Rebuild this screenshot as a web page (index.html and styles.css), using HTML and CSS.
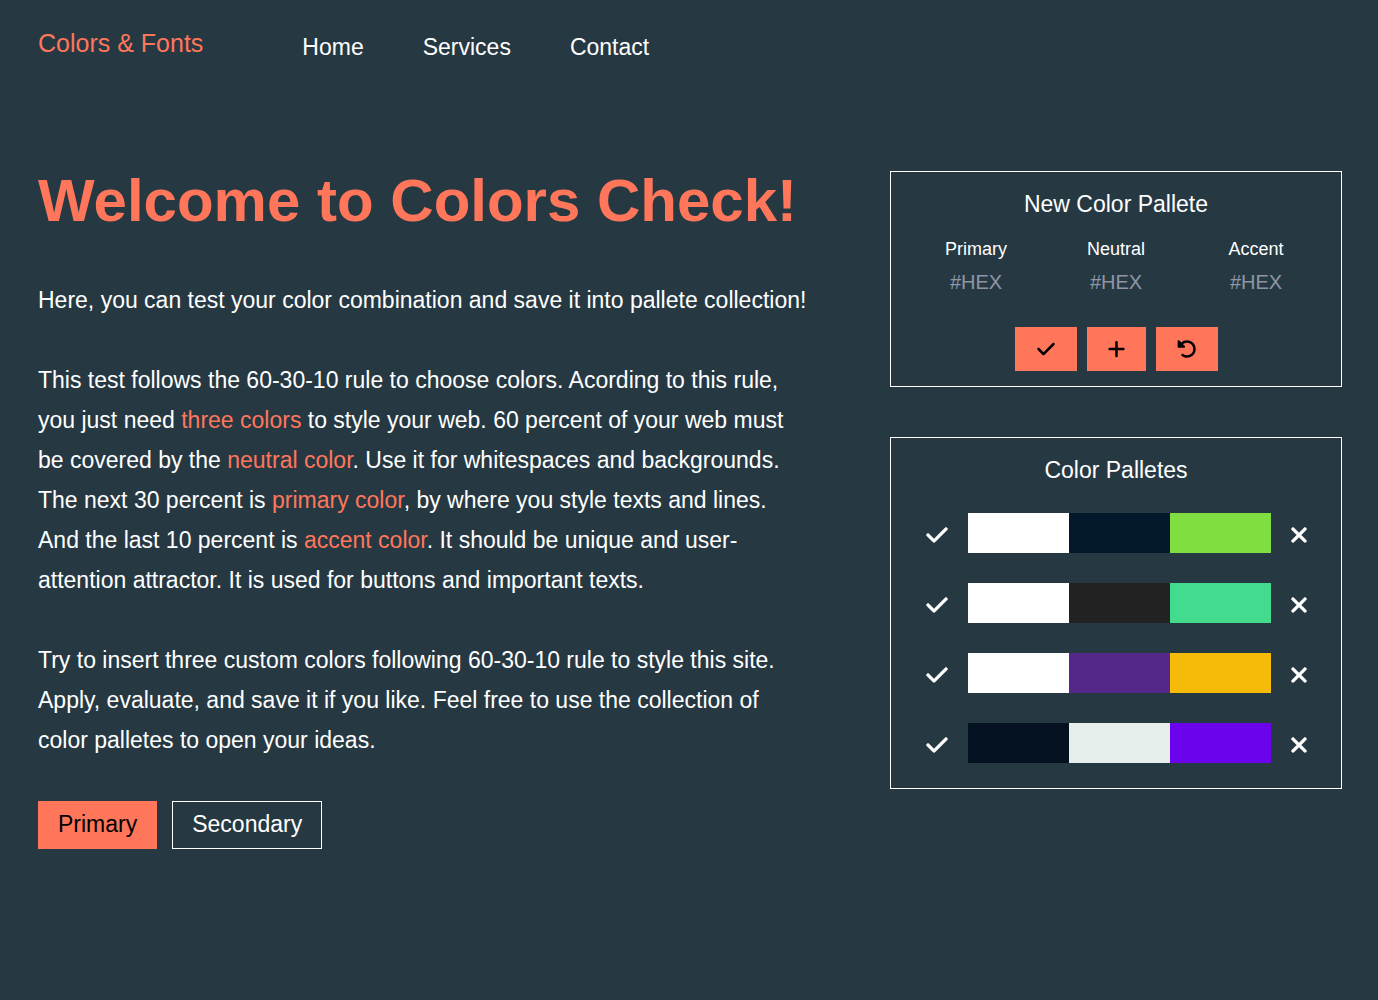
FILE: index.html
```html
<!DOCTYPE html>
<html lang="en">
<head>
<meta charset="utf-8">
<meta name="viewport" content="width=device-width, initial-scale=1">
<title>Colors &amp; Fonts</title>
<link rel="stylesheet" href="styles.css">
</head>
<body>
<svg class="sprite" aria-hidden="true">
  <symbol id="check" viewBox="0 0 512 512"><path d="M470.6 105.4c12.5 12.5 12.5 32.8 0 45.3l-256 256c-12.5 12.5-32.8 12.5-45.3 0l-128-128c-12.5-12.5-12.5-32.8 0-45.3s32.8-12.5 45.3 0L192 338.7 425.4 105.4c12.5-12.5 32.8-12.5 45.3 0z"/></symbol>
  <symbol id="plus" viewBox="0 0 448 512"><path d="M256 80c0-17.7-14.3-32-32-32s-32 14.3-32 32v144H48c-17.7 0-32 14.3-32 32s14.3 32 32 32h144v144c0 17.7 14.3 32 32 32s32-14.3 32-32V288h144c17.7 0 32-14.3 32-32s-14.3-32-32-32H256V80z"/></symbol>
  <symbol id="undo" viewBox="0 0 512 512"><path d="M480 256c0 123.4-100.5 223.9-223.9 223.9c-48.86 0-95.19-15.58-134.2-44.86c-14.12-10.59-16.97-30.66-6.375-44.81c10.59-14.12 30.62-16.94 44.81-6.375c27.84 20.91 61 31.94 95.88 31.94C344.3 415.8 416 344.1 416 256s-71.69-159.8-159.8-159.8c-37.46 0-73.09 13.49-101.3 36.64l45.12 45.14c17.01 17.02 4.955 46.1-19.1 46.1H35.17C24.58 224.1 16 215.5 16 204.9V59.04c0-24.04 29.07-36.08 46.07-19.07l47.6 47.63C149.9 52.71 201.5 32.11 256.1 32.11C379.5 32.11 480 132.6 480 256z"/></symbol>
  <symbol id="xmark" viewBox="0 0 384 512"><path d="M342.6 150.6c12.5-12.5 12.5-32.8 0-45.3s-32.8-12.5-45.3 0L192 210.7 86.6 105.4c-12.5-12.5-32.8-12.5-45.3 0s-12.5 32.8 0 45.3L146.7 256 41.4 361.4c-12.5 12.5-12.5 32.8 0 45.3s32.8 12.5 45.3 0L192 301.3 297.4 406.6c12.5 12.5 32.8 12.5 45.3 0s12.5-32.8 0-45.3L237.3 256 342.6 150.6z"/></symbol>
</svg>
<header class="header">
  <a class="logo" href="#">Colors &amp; Fonts</a>
  <nav class="nav">
    <a href="#">Home</a>
    <a href="#">Services</a>
    <a href="#">Contact</a>
  </nav>
</header>
<main class="main">
  <section class="intro">
    <h1>Welcome to Colors Check!</h1>
    <p>Here, you can test your color combination and save it into pallete collection!</p>
    <p>This test follows the 60-30-10 rule to choose colors. Acording to this rule, you just need <span class="accent">three colors</span> to style your web. 60 percent of your web must be covered by the <span class="accent">neutral color</span>. Use it for whitespaces and backgrounds. The next 30 percent is <span class="accent">primary color</span>, by where you style texts and lines. And the last 10 percent is <span class="accent">accent color</span>. It should be unique and user-attention attractor. It is used for buttons and important texts.</p>
    <p>Try to insert three custom colors following 60-30-10 rule to style this site. Apply, evaluate, and save it if you like. Feel free to use the collection of color palletes to open your ideas.</p>
    <div class="actions">
      <button class="btn btn-primary" type="button">Primary</button>
      <button class="btn btn-secondary" type="button">Secondary</button>
    </div>
  </section>
  <aside class="side">
    <form class="card">
      <h2>New Color Pallete</h2>
      <div class="fields">
        <div class="field"><label for="primary">Primary</label><input id="primary" type="text" placeholder="#HEX"></div>
        <div class="field"><label for="neutral">Neutral</label><input id="neutral" type="text" placeholder="#HEX"></div>
        <div class="field"><label for="accent">Accent</label><input id="accent" type="text" placeholder="#HEX"></div>
      </div>
      <div class="tools">
        <button class="tool" type="button" aria-label="Apply"><svg class="icon"><use href="#check"/></svg></button>
        <button class="tool" type="button" aria-label="Save"><svg class="icon icon-plus"><use href="#plus"/></svg></button>
        <button class="tool" type="button" aria-label="Reset"><svg class="icon"><use href="#undo"/></svg></button>
      </div>
    </form>
    <section class="card">
      <h2>Color Palletes</h2>
      <ul class="palettes">
        <li class="palette">
          <button class="row-btn" type="button" aria-label="Apply"><svg><use href="#check"/></svg></button>
          <div class="swatches"><span class="white"></span><span class="navy"></span><span class="lime"></span></div>
          <button class="row-btn" type="button" aria-label="Delete"><svg><use href="#xmark"/></svg></button>
        </li>
        <li class="palette">
          <button class="row-btn" type="button" aria-label="Apply"><svg><use href="#check"/></svg></button>
          <div class="swatches"><span class="white"></span><span class="charcoal"></span><span class="green"></span></div>
          <button class="row-btn" type="button" aria-label="Delete"><svg><use href="#xmark"/></svg></button>
        </li>
        <li class="palette">
          <button class="row-btn" type="button" aria-label="Apply"><svg><use href="#check"/></svg></button>
          <div class="swatches"><span class="white"></span><span class="purple"></span><span class="amber"></span></div>
          <button class="row-btn" type="button" aria-label="Delete"><svg><use href="#xmark"/></svg></button>
        </li>
        <li class="palette">
          <button class="row-btn" type="button" aria-label="Apply"><svg><use href="#check"/></svg></button>
          <div class="swatches"><span class="midnight"></span><span class="mist"></span><span class="violet"></span></div>
          <button class="row-btn" type="button" aria-label="Delete"><svg><use href="#xmark"/></svg></button>
        </li>
      </ul>
    </section>
  </aside>
</main>
</body>
</html>
```

FILE: styles.css
```css
:root {
  --neutral: #263943;
  --primary: #ffffff;
  --accent: #ff765b;
}

* {
  box-sizing: border-box;
  margin: 0;
  padding: 0;
}

body {
  min-height: 100vh;
  padding: 0 36px 0 38px;
  background: var(--neutral);
  color: var(--primary);
  font-family: "Liberation Sans", Arial, sans-serif;
  font-size: 23px;
  line-height: 40px;
}

a {
  color: inherit;
  text-decoration: none;
}

button,
input {
  border: 0;
  background: none;
  color: inherit;
  font: inherit;
}

.sprite {
  display: none;
}

.header {
  display: flex;
  align-items: flex-start;
  gap: 99px;
  padding-top: 23px;
}

.logo {
  color: var(--accent);
  font-size: 25px;
}

.nav {
  display: flex;
  gap: 59px;
  padding-top: 4px;
}

.main {
  display: flex;
  justify-content: space-between;
  align-items: flex-start;
  gap: 60px;
  padding: 104px 0 60px;
}

.intro {
  max-width: 772px;
}

h1 {
  margin-bottom: 49px;
  color: var(--accent);
  font-size: 60px;
  line-height: 60px;
}

p {
  margin-bottom: 40px;
}

.accent {
  color: var(--accent);
}

.actions {
  display: flex;
  gap: 15px;
  padding-top: 1px;
}

.btn {
  padding: 9px 19px 11px;
  border: 1px solid var(--primary);
  line-height: 26px;
}

.btn-primary {
  border-color: var(--accent);
  background: var(--accent);
  color: #000;
}

.side {
  display: flex;
  flex: 0 0 452px;
  flex-direction: column;
  gap: 50px;
}

.card {
  padding: 12px 15px 15px;
  border: 1px solid var(--primary);
}

h2 {
  font-size: 23px;
  font-weight: 400;
  text-align: center;
}

.fields {
  display: grid;
  grid-template-columns: repeat(3, 1fr);
  margin: 10px 0 27px;
}

.field {
  display: flex;
  flex-direction: column;
  align-items: center;
}

label {
  font-size: 18px;
  line-height: 30px;
}

input {
  width: 100%;
  height: 36px;
  font-size: 20px;
  text-align: center;
}

input::placeholder {
  color: #9095a5;
}

.tools {
  display: flex;
  justify-content: center;
  gap: 10px;
}

.tool {
  display: flex;
  padding: 12px 20px;
  background: var(--accent);
  color: #000;
}

.icon {
  width: 22px;
  height: 20px;
  fill: currentColor;
}

.icon-plus {
  width: 19px;
}

.palettes {
  display: flex;
  flex-direction: column;
  gap: 30px;
  padding: 23px 0 10px;
  list-style: none;
}

.palette {
  display: grid;
  grid-template-columns: 62px 1fr 55px;
  height: 40px;
}

.row-btn {
  display: flex;
  align-items: center;
  justify-content: center;
  padding-top: 3px;
}

.row-btn svg {
  width: 24px;
  height: 24px;
  fill: currentColor;
  stroke: currentColor;
  stroke-width: 10;
}

.swatches {
  display: grid;
  grid-template-columns: repeat(3, 1fr);
}

.white { background: #ffffff; }
.navy { background: #03182b; }
.lime { background: #80df40; }
.charcoal { background: #222222; }
.green { background: #43dc8f; }
.purple { background: #532888; }
.amber { background: #f6bb09; }
.midnight { background: #031121; }
.mist { background: #e5eeeb; }
.violet { background: #6b04ed; }
```
